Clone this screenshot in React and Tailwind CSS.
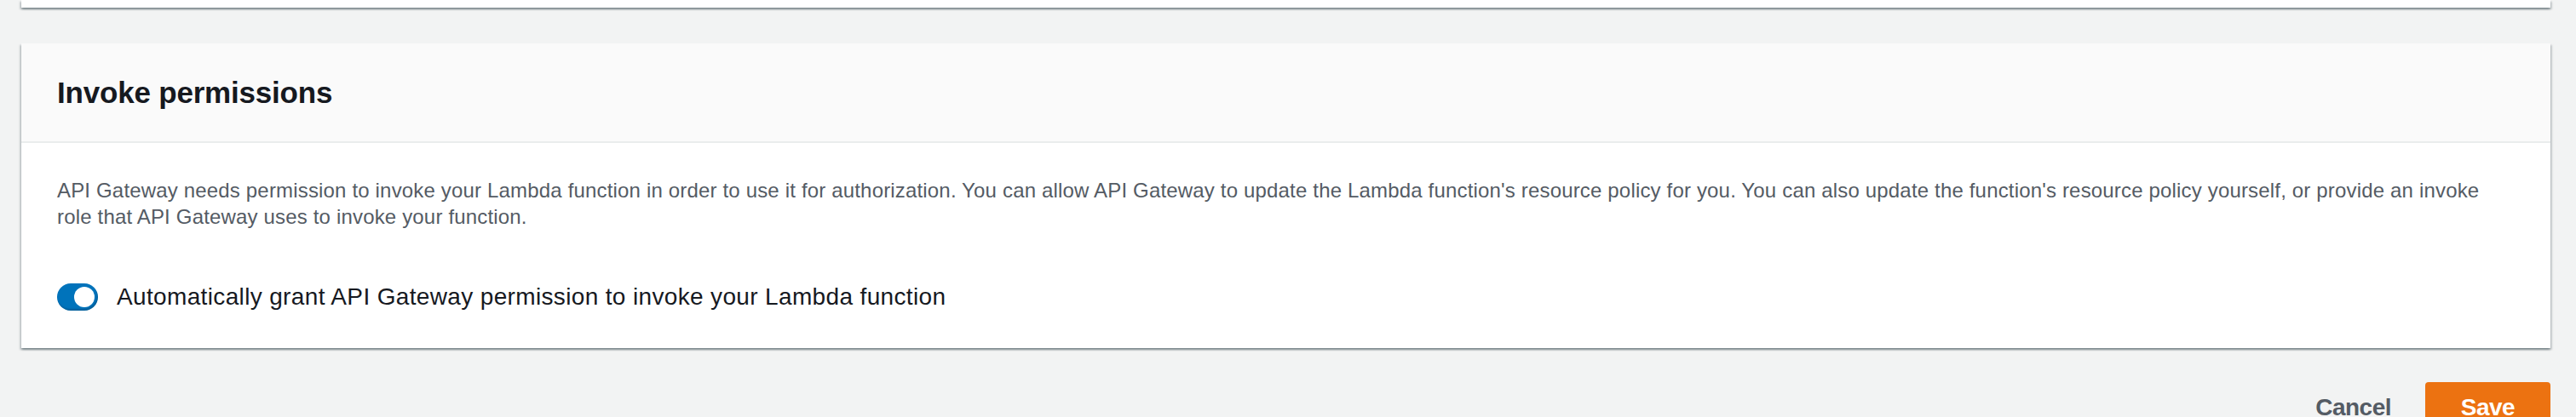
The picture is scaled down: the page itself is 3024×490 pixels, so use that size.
const cardShadow =
  'shadow-[0_2px_2px_0_rgba(0,28,36,0.3),2px_2px_2px_0_rgba(0,28,36,0.15),-2px_2px_2px_0_rgba(0,28,36,0.15)]';

function Toggle({ checked }) {
  return (
    <span
      className={`flex h-[32px] w-[48px] shrink-0 items-center rounded-full p-[4px] ${
        checked ? 'justify-end bg-[#0073bb]' : 'justify-start bg-[#879596]'
      } shadow-[inset_-1px_-2px_2px_rgba(0,0,0,0.18)]`}
    >
      <span className="h-[24px] w-[24px] rounded-full bg-white" />
    </span>
  );
}

export default function App() {
  return (
    <div className="min-h-screen bg-[#f2f3f3] pl-[25px] pr-[30px] font-['Liberation_Sans',Arial,sans-serif]">
      {/* bottom of the previous container */}
      <div className={`h-[9px] bg-white ${cardShadow}`} />

      <section className={`mt-[42px] bg-white ${cardShadow}`}>
        <div className="flex h-[117px] items-center border-b-2 border-[#eaeded] bg-[#fafafa] px-[42px]">
          <h2 className="text-[35px] font-bold leading-[44px] tracking-[-0.2px] text-[#16191f]">Invoke permissions</h2>
        </div>
        <div className="px-[42px] pt-[40px] pb-[42px]">
          <p className="max-w-[2875px] text-[24px] leading-[31px] tracking-[0.17px] text-[#545b64]">
            API Gateway needs permission to invoke your Lambda function in order to use it for authorization. You can
            allow API Gateway to update the Lambda function's resource policy for you. You can also update the
            function's resource policy yourself, or provide an invoke role that API Gateway uses to invoke your
            function.
          </p>
          <label className="mt-[61px] flex items-center gap-[22px]">
            <Toggle checked />
            <span className="text-[28px] leading-[36px] tracking-[0.35px] text-[#16191f]">
              Automatically grant API Gateway permission to invoke your Lambda function
            </span>
          </label>
        </div>
      </section>

      <div className="mt-[40px] flex items-center justify-end">
        <button className="h-[60px] px-[40px] text-[28px] font-bold tracking-[-0.5px] text-[#545b64]">Cancel</button>
        <button className="h-[60px] w-[147px] rounded-[4px] bg-[#ec7211] text-[28px] font-bold tracking-[-0.5px] text-white">
          Save
        </button>
      </div>
    </div>
  );
}
